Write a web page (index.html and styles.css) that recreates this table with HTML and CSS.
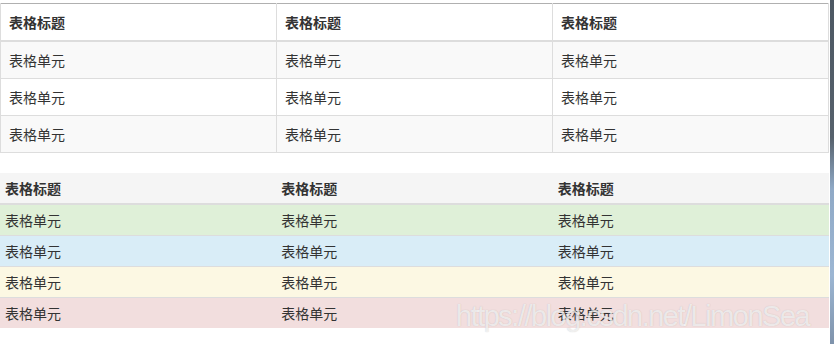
FILE: index.html
```html
<!DOCTYPE html>
<html lang="zh">
<head>
<meta charset="utf-8">
<link rel="stylesheet" href="styles.css">
</head>
<body>
<div class="frame">
  <main class="page">
    <table class="table bordered">
      <thead>
        <tr><th>表格标题</th><th>表格标题</th><th>表格标题</th></tr>
      </thead>
      <tbody>
        <tr class="odd"><td>表格单元</td><td>表格单元</td><td>表格单元</td></tr>
        <tr><td>表格单元</td><td>表格单元</td><td>表格单元</td></tr>
        <tr class="odd"><td>表格单元</td><td>表格单元</td><td>表格单元</td></tr>
      </tbody>
    </table>
    <table class="table condensed">
      <thead>
        <tr class="active"><th>表格标题</th><th>表格标题</th><th>表格标题</th></tr>
      </thead>
      <tbody>
        <tr class="success"><td>表格单元</td><td>表格单元</td><td>表格单元</td></tr>
        <tr class="info"><td>表格单元</td><td>表格单元</td><td>表格单元</td></tr>
        <tr class="warning"><td>表格单元</td><td>表格单元</td><td>表格单元</td></tr>
        <tr class="danger"><td>表格单元</td><td>表格单元</td><td>表格单元</td></tr>
      </tbody>
    </table>
    <div class="watermark">https://blog.csdn.net/LimonSea</div>
  </main>
  <div class="edge"></div>
</div>
</body>
</html>
```
FILE: styles.css
```css
html, body {
  margin: 0;
  padding: 0;
  background: #fff;
}
body {
  font-family: "Noto Sans CJK SC", "Liberation Sans", sans-serif;
  font-size: 14px;
  line-height: 20px;
  color: #333;
}
.frame {
  display: flex;
  width: 834px;
  height: 344px;
  overflow: hidden;
}
.page {
  position: relative;
  width: 830px;
  padding-top: 3px;
}
.edge {
  width: 4px;
  background: linear-gradient(to bottom, #4d5863 0%, #56616c 40%, #8fa9c6 55%, #9cb6d3 80%, #7f93ab 100%);
}
.table {
  width: 829px;
  border-collapse: collapse;
  table-layout: fixed;
  margin-bottom: 20px;
}
.table th {
  font-weight: bold;
  text-align: left;
}
.bordered {
  border-top: 1px solid #b0b0b0;
}
.bordered th, .bordered td {
  border: 1px solid #ddd;
  padding: 8px;
}
.bordered thead th {
  border-top: 0;
  border-bottom-width: 2px;
}
.bordered .odd td { background: #f9f9f9; }
.condensed th, .condensed td {
  padding: 5px;
  border-top: 1px solid #ddd;
}
.condensed thead th {
  border-top: 0;
  border-bottom: 2px solid #ddd;
}
.condensed thead + tbody tr:first-child td { border-top: 0; }
.active th { background: #f5f5f5; }
.success td { background: #dff0d8; }
.info td { background: #d9edf7; }
.warning td { background: #fcf8e3; }
.danger td { background: #f2dede; }
.watermark {
  position: absolute;
  left: 456px;
  top: 298px;
  font-family: "Liberation Sans", Arial, sans-serif;
  font-size: 29px;
  letter-spacing: -1.5px;
  line-height: 36px;
  color: rgba(255, 255, 255, 0.7);
  text-shadow: 0 0 1px rgba(120, 120, 120, 0.4);
  white-space: nowrap;
}
```
